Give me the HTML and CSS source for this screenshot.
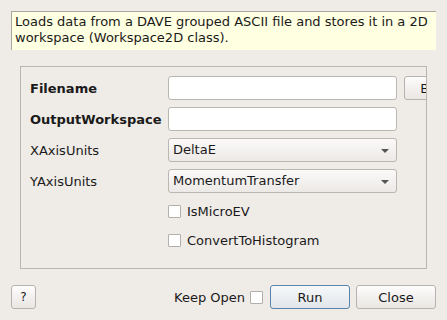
FILE: index.html
```html
<!DOCTYPE html>
<html lang="en">
<head>
  <meta charset="UTF-8" />
  <title>LoadDaveGrp input dialog</title>
  <link rel="stylesheet" href="styles.css">
</head>
<body>
  <div class="dialog">
    <p class="description">Loads data from a DAVE grouped ASCII file and stores it in a 2D workspace (Workspace2D class).</p>

    <div class="props">
      <div class="grid">
        <label class="name bold">Filename</label>
        <input class="field" type="text">
        <button class="btn browse">Browse</button>

        <label class="name bold">OutputWorkspace</label>
        <input class="field" type="text">
        <span></span>

        <label class="name">XAxisUnits</label>
        <div class="combo">DeltaE<span class="arrow"></span></div>
        <span></span>

        <label class="name">YAxisUnits</label>
        <div class="combo">MomentumTransfer<span class="arrow"></span></div>
        <span></span>

        <span></span>
        <div class="check"><span class="box"></span>IsMicroEV</div>
        <span></span>

        <span></span>
        <div class="check"><span class="box"></span>ConvertToHistogram</div>
        <span></span>
      </div>
    </div>

    <div class="buttons">
      <button class="btn help">?</button>
      <span class="spacer"></span>
      <span class="keep">Keep Open</span>
      <span class="box"></span>
      <button class="btn run">Run</button>
      <button class="btn close">Close</button>
    </div>
  </div>
</body>
</html>
```

FILE: styles.css
```css
* {
  margin: 0;
  padding: 0;
  box-sizing: border-box;
}

body {
  background: #efebe7;
  font-family: "DejaVu Sans", sans-serif;
  font-size: 13px;
  color: #1a1a1a;
  width: 447px;
  height: 320px;
  overflow: hidden;
}

.dialog {
  display: flex;
  flex-direction: column;
  padding: 11px 11px 0 11px;
}

.description {
  background: #ffffe1;
  border-top: 1px solid #a9a6a2;
  border-left: 1px solid #a9a6a2;
  height: 39px;
  padding: 2px 3px;
  line-height: 16px;
}

.props {
  margin: 16px 9px 0 9px;
  border: 1px solid #b9b5b0;
  height: 203px;
  overflow: hidden;
  padding: 9px 0 0 9px;
}

.grid {
  display: grid;
  grid-template-columns: 138px 229px 80px;
  grid-template-rows: 24px 24px 24px 24px 22px 22px;
  row-gap: 7px;
  align-items: center;
}

.bold {
  font-weight: bold;
}

.field {
  height: 24px;
  background: #fff;
  border: 1px solid #bab6b0;
  border-radius: 3px;
  font: inherit;
}

.combo {
  position: relative;
  height: 24px;
  border: 1px solid #bab6b0;
  border-radius: 3px;
  background: linear-gradient(#fbfaf9, #ece9e6);
  padding: 0 4px;
  line-height: 22px;
}

.arrow {
  position: absolute;
  right: 7px;
  top: 10px;
  border-left: 4px solid transparent;
  border-right: 4px solid transparent;
  border-top: 4px solid #555;
}

.check {
  display: flex;
  align-items: center;
  gap: 6px;
}

.box {
  width: 13px;
  height: 13px;
  background: #fff;
  border: 1px solid #b3afaa;
  border-radius: 1px;
}

.btn {
  height: 24px;
  font: inherit;
  color: #1a1a1a;
  border: 1px solid #b6b2ad;
  border-radius: 3px;
  background: linear-gradient(#fdfcfc, #e9e6e3);
}

.browse {
  margin-left: 7px;
  width: 80px;
}

.buttons {
  display: flex;
  align-items: center;
  margin-top: 16px;
}

.help {
  width: 25px;
  font-size: 12px;
}

.spacer {
  flex: 1;
}

.keep {
  margin-right: 5px;
}

.run {
  width: 80px;
  margin-left: 7px;
  border-color: #5a84ac;
  background: linear-gradient(#f6f8fa, #e1e6ea);
}

.close {
  width: 80px;
  margin-left: 6px;
}
```
